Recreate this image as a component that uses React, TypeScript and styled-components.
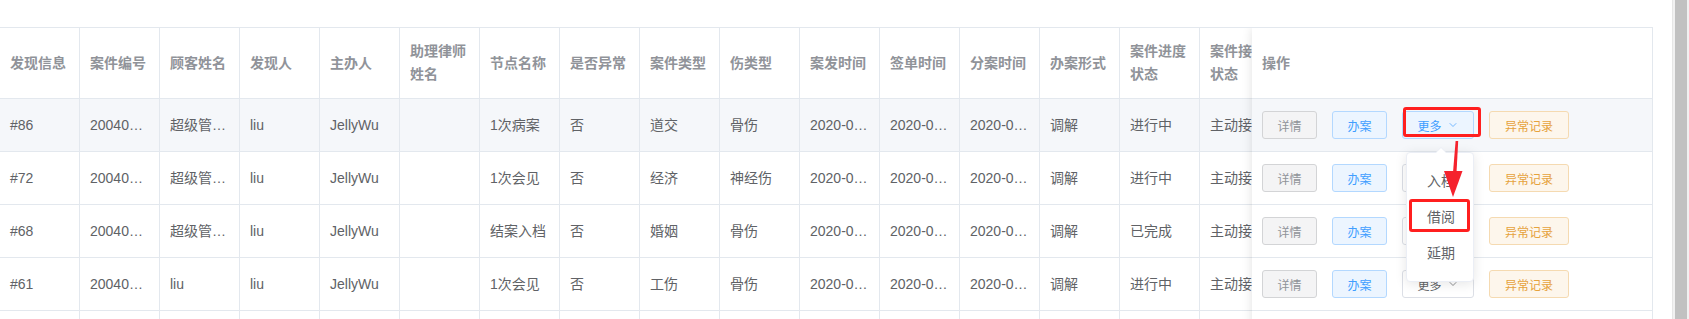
import React from 'react';
import styled, { createGlobalStyle, css } from 'styled-components';
import { ChevronDown } from 'lucide-react';

const GlobalStyle = createGlobalStyle`
  html, body {
    margin: 0;
    padding: 0;
    background: #fff;
    overflow: hidden;
  }
  body {
    font-family: "Liberation Sans", "Noto Sans CJK SC", sans-serif;
    -webkit-font-smoothing: antialiased;
  }
`;

const BORDER = '#e3e8ee';
const COL_W = 80;

type CaseRow = {
  id: string;
  no: string;
  customer: string;
  finder: string;
  owner: string;
  assistant: string;
  node: string;
  abnormal: string;
  caseType: string;
  injury: string;
  happenAt: string;
  signAt: string;
  assignAt: string;
  mode: string;
  progress: string;
  receive: string;
};

const headers = [
  '发现信息',
  '案件编号',
  '顾客姓名',
  '发现人',
  '主办人',
  '助理律师姓名',
  '节点名称',
  '是否异常',
  '案件类型',
  '伤类型',
  '案发时间',
  '签单时间',
  '分案时间',
  '办案形式',
  '案件进度状态',
  '案件接收状态',
];

const rows: CaseRow[] = [
  { id: '#86', no: '2004010086', customer: '超级管理员', finder: 'liu', owner: 'JellyWu', assistant: '', node: '1次病案', abnormal: '否', caseType: '道交', injury: '骨伤', happenAt: '2020-04-01', signAt: '2020-04-01', assignAt: '2020-04-01', mode: '调解', progress: '进行中', receive: '主动接收' },
  { id: '#72', no: '2004010072', customer: '超级管理员', finder: 'liu', owner: 'JellyWu', assistant: '', node: '1次会见', abnormal: '否', caseType: '经济', injury: '神经伤', happenAt: '2020-04-01', signAt: '2020-04-01', assignAt: '2020-04-01', mode: '调解', progress: '进行中', receive: '主动接收' },
  { id: '#68', no: '2004010068', customer: '超级管理员', finder: 'liu', owner: 'JellyWu', assistant: '', node: '结案入档', abnormal: '否', caseType: '婚姻', injury: '骨伤', happenAt: '2020-04-01', signAt: '2020-04-01', assignAt: '2020-04-01', mode: '调解', progress: '已完成', receive: '主动接收' },
  { id: '#61', no: '2004010061', customer: 'liu', finder: 'liu', owner: 'JellyWu', assistant: '', node: '1次会见', abnormal: '否', caseType: '工伤', injury: '骨伤', happenAt: '2020-04-01', signAt: '2020-04-01', assignAt: '2020-04-01', mode: '调解', progress: '进行中', receive: '主动接收' },
  { id: '#55', no: '2004010055', customer: 'liu', finder: 'liu', owner: 'JellyWu', assistant: '', node: '1次会见', abnormal: '否', caseType: '工伤', injury: '骨伤', happenAt: '2020-04-01', signAt: '2020-04-01', assignAt: '2020-04-01', mode: '调解', progress: '进行中', receive: '主动接收' },
];

const rowValues = (r: CaseRow) => [
  r.id, r.no, r.customer, r.finder, r.owner, r.assistant, r.node, r.abnormal,
  r.caseType, r.injury, r.happenAt, r.signAt, r.assignAt, r.mode, r.progress, r.receive,
];

type BtnKind = 'info' | 'primary' | 'warning' | 'default';

const btnColors: Record<BtnKind, { bg: string; border: string; color: string }> = {
  info: { bg: '#f4f4f5', border: '#d3d4d6', color: '#909399' },
  primary: { bg: '#ecf5ff', border: '#b3d8ff', color: '#409eff' },
  warning: { bg: '#fdf6ec', border: '#f5dab1', color: '#e6a23c' },
  default: { bg: '#fff', border: '#dcdfe6', color: '#606266' },
};

export default function App(): React.JSX.Element {
  return (
    <>
      <GlobalStyle />
      <Page>
        <Main>
          <TableWrap>
            <HeaderRow>
              {headers.map((h) => (
                <HeadCell key={h}>
                  <HeadText>{h}</HeadText>
                </HeadCell>
              ))}
              <HeadCell>
                <HeadText>操作</HeadText>
              </HeadCell>
            </HeaderRow>
            {rows.map((r, i) => (
              <BodyRow key={r.id} $hover={i === 0}>
                {rowValues(r).map((v, j) => (
                  <BodyCell key={j}>
                    <CellText>{v}</CellText>
                  </BodyCell>
                ))}
                <BodyCell />
              </BodyRow>
            ))}

            <FixedRight>
              <FixedHead>
                <HeadText>操作</HeadText>
              </FixedHead>
              {rows.map((r, i) => (
                <FixedRow key={r.id} $hover={i === 0}>
                  <Actions>
                    <Btn $kind="info" $w={55}>详情</Btn>
                    <Btn $kind="primary" $w={55}>办案</Btn>
                    <Btn $kind={i === 0 ? 'primary' : 'default'} $w={72}>
                      更多
                      <ChevronDown size={12} strokeWidth={1.4} />
                    </Btn>
                    <Btn $kind="warning" $w={80}>异常记录</Btn>
                  </Actions>
                </FixedRow>
              ))}
            </FixedRight>
          </TableWrap>

          <Dropdown>
            <DropItem>入档</DropItem>
            <DropItem>借阅</DropItem>
            <DropItem>延期</DropItem>
          </Dropdown>

          <Mark $left={1403} $top={107} $w={78} $h={30} />
          <Mark $left={1409} $top={199} $w={61} $h={33} />

          <Arrow viewBox="0 0 30 62" width={30} height={62}>
            <polygon points="15.6,2 18.2,2 16.4,36 12.8,36" fill="#f5222d" />
            <polygon points="4,32 22.5,32 13,58" fill="#f5222d" />
          </Arrow>
        </Main>
        <ScrollTrack>
          <ScrollThumb />
        </ScrollTrack>
      </Page>
    </>
  );
}

const Page = styled.div`
  display: flex;
  width: 1689px;
  height: 319px;
  overflow: hidden;
`;

const Main = styled.div`
  position: relative;
  flex: 1;
  padding-top: 27px;
  box-sizing: border-box;
`;

const TableWrap = styled.div`
  position: relative;
  width: 1653px;
  height: 292px;
  box-sizing: border-box;
  border-top: 1px solid ${BORDER};
  border-right: 1px solid ${BORDER};
  overflow: hidden;
`;

const gridCols = css`
  display: grid;
  grid-template-columns: repeat(16, ${COL_W}px) 400px;
  width: ${COL_W * 16 + 400}px;
`;

const HeaderRow = styled.div`
  ${gridCols};
  background: #fff;
`;

const BodyRow = styled.div<{ $hover: boolean }>`
  ${gridCols};
  background: ${(p) => (p.$hover ? '#f5f7fa' : '#fff')};
`;

const cellBase = css`
  box-sizing: border-box;
  display: flex;
  align-items: center;
  padding: 12px 0;
  border-right: 1px solid ${BORDER};
  border-bottom: 1px solid ${BORDER};
  min-width: 0;
`;

const HeadCell = styled.div`
  ${cellBase};
  height: 71px;
`;

const BodyCell = styled.div`
  ${cellBase};
  height: 53px;
`;

const HeadText = styled.div`
  box-sizing: border-box;
  width: 100%;
  padding: 0 10px;
  font-size: 14px;
  line-height: 23px;
  font-weight: 600;
  color: #909399;
  word-break: break-all;
`;

const CellText = styled.div`
  box-sizing: border-box;
  width: 100%;
  padding: 0 10px;
  font-size: 14px;
  line-height: 23px;
  color: #606266;
  white-space: nowrap;
  overflow: hidden;
  text-overflow: ellipsis;
`;

const FixedRight = styled.div`
  position: absolute;
  top: 0;
  right: 0;
  width: 400px;
  background: #fff;
  box-shadow: 0 0 10px rgba(0, 0, 0, 0.12);
`;

const FixedHead = styled.div`
  ${cellBase};
  border-right: none;
  height: 71px;
`;

const FixedRow = styled.div<{ $hover: boolean }>`
  ${cellBase};
  border-right: none;
  height: 53px;
  background: ${(p) => (p.$hover ? '#f5f7fa' : '#fff')};
`;

const Actions = styled.div`
  display: flex;
  align-items: center;
  gap: 15px;
  padding: 0 10px;
`;

const Btn = styled.button<{ $kind: BtnKind; $w: number }>`
  display: inline-flex;
  align-items: center;
  justify-content: center;
  gap: 5px;
  box-sizing: border-box;
  width: ${(p) => p.$w}px;
  height: 28px;
  padding: 0;
  border-radius: 3px;
  font-family: inherit;
  font-size: 12px;
  background: ${(p) => btnColors[p.$kind].bg};
  border: 1px solid ${(p) => btnColors[p.$kind].border};
  color: ${(p) => btnColors[p.$kind].color};
  cursor: pointer;
`;

const Dropdown = styled.div`
  position: absolute;
  left: 1406px;
  top: 152px;
  width: 68px;
  box-sizing: border-box;
  padding: 10px 0;
  background: #fff;
  border: 1px solid #ebeef5;
  border-radius: 4px;
  box-shadow: 0 2px 12px rgba(0, 0, 0, 0.1);

  &::before {
    content: '';
    position: absolute;
    top: -6px;
    left: 28px;
    border: 6px solid transparent;
    border-top: none;
    border-bottom-color: #ebeef5;
  }
  &::after {
    content: '';
    position: absolute;
    top: -5px;
    left: 28px;
    border: 6px solid transparent;
    border-top: none;
    border-bottom-color: #fff;
  }
`;

const DropItem = styled.div`
  padding: 0 20px;
  line-height: 36px;
  font-size: 14px;
  color: #606266;
  white-space: nowrap;
`;

const Mark = styled.div<{ $left: number; $top: number; $w: number; $h: number }>`
  position: absolute;
  left: ${(p) => p.$left}px;
  top: ${(p) => p.$top}px;
  width: ${(p) => p.$w}px;
  height: ${(p) => p.$h}px;
  box-sizing: border-box;
  border: 3px solid #ff1f1f;
  border-radius: 3px;
`;

const Arrow = styled.svg`
  position: absolute;
  left: 1440px;
  top: 139px;
`;

const ScrollTrack = styled.div`
  width: 17px;
  height: 100%;
  box-sizing: border-box;
  padding: 0 2px 0 2px;
  background: #f1f1f1;
  border-left: 1px solid #e6e6e6;
`;

const ScrollThumb = styled.div`
  height: 100%;
  background: #c1c1c1;
`;
